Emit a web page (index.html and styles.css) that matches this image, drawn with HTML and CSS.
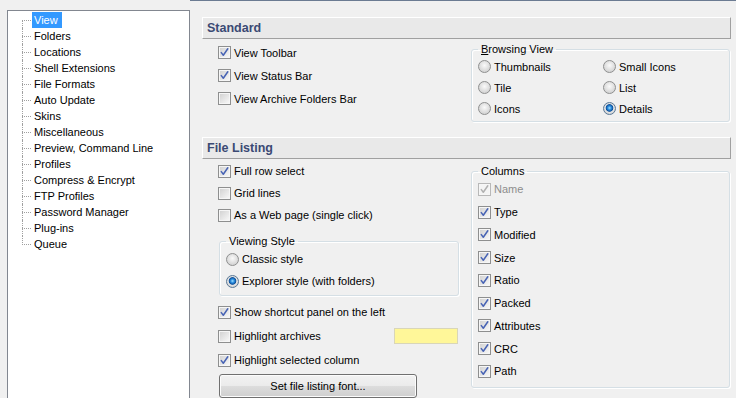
FILE: index.html
```html
<!DOCTYPE html>
<html lang="en">
<head>
    <meta charset="UTF-8">
    <title>Settings</title>
    <link rel="stylesheet" href="styles.css">
</head>
<body>
    <div class="window">
        <div class="tree">
            <ul class="tree-list">
                <li class="selected"><span>View</span></li>
                <li><span>Folders</span></li>
                <li><span>Locations</span></li>
                <li><span>Shell Extensions</span></li>
                <li><span>File Formats</span></li>
                <li><span>Auto Update</span></li>
                <li><span>Skins</span></li>
                <li><span>Miscellaneous</span></li>
                <li><span>Preview, Command Line</span></li>
                <li><span>Profiles</span></li>
                <li><span>Compress &amp; Encrypt</span></li>
                <li><span>FTP Profiles</span></li>
                <li><span>Password Manager</span></li>
                <li><span>Plug-ins</span></li>
                <li><span>Queue</span></li>
            </ul>
        </div>

        <div class="pane">
            <div class="section">
                <div class="section-head">Standard</div>
                <div class="section-body standard">
                    <div class="col-left">
                        <div class="row"><span class="cb checked"><svg viewBox="0 0 11 11"><path d="M2.3 5.6 L4.3 8.2 L8.8 1.8"/></svg></span>View Toolbar</div>
                        <div class="row"><span class="cb checked"><svg viewBox="0 0 11 11"><path d="M2.3 5.6 L4.3 8.2 L8.8 1.8"/></svg></span>View Status Bar</div>
                        <div class="row"><span class="cb"></span>View Archive Folders Bar</div>
                    </div>
                    <fieldset class="group browsing">
                        <legend><u>B</u>rowsing View</legend>
                        <div class="radio-grid">
                            <div class="opt"><span class="radio"></span>Thumbnails</div>
                            <div class="opt"><span class="radio"></span>Small Icons</div>
                            <div class="opt"><span class="radio"></span>Tile</div>
                            <div class="opt"><span class="radio"></span>List</div>
                            <div class="opt"><span class="radio"></span>Icons</div>
                            <div class="opt"><span class="radio on"></span>Details</div>
                        </div>
                    </fieldset>
                </div>
            </div>

            <div class="section listing">
                <div class="section-head">File Listing</div>
                <div class="section-body">
                    <div class="col-left">
                        <div class="row short"><span class="cb checked"><svg viewBox="0 0 11 11"><path d="M2.3 5.6 L4.3 8.2 L8.8 1.8"/></svg></span>Full row select</div>
                        <div class="row short"><span class="cb"></span>Grid lines</div>
                        <div class="row short"><span class="cb"></span>As a Web page (single click)</div>

                        <fieldset class="group viewing">
                            <legend>Viewing Style</legend>
                            <div class="opt tall"><span class="radio"></span>Classic style</div>
                            <div class="opt tall"><span class="radio on"></span>Explorer style (with folders)</div>
                        </fieldset>

                        <div class="row wide first"><span class="cb checked"><svg viewBox="0 0 11 11"><path d="M2.3 5.6 L4.3 8.2 L8.8 1.8"/></svg></span>Show shortcut panel on the left</div>
                        <div class="row wide"><span class="cb"></span>Highlight archives<span class="swatch"></span></div>
                        <div class="row wide"><span class="cb checked"><svg viewBox="0 0 11 11"><path d="M2.3 5.6 L4.3 8.2 L8.8 1.8"/></svg></span>Highlight selected column</div>
                        <button class="button">Set file listing font...</button>
                    </div>

                    <fieldset class="group columns">
                        <legend>Columns</legend>
                        <div class="opt col disabled"><span class="cb checked"><svg viewBox="0 0 11 11"><path d="M2.3 5.6 L4.3 8.2 L8.8 1.8"/></svg></span>Name</div>
                        <div class="opt col"><span class="cb checked"><svg viewBox="0 0 11 11"><path d="M2.3 5.6 L4.3 8.2 L8.8 1.8"/></svg></span>Type</div>
                        <div class="opt col"><span class="cb checked"><svg viewBox="0 0 11 11"><path d="M2.3 5.6 L4.3 8.2 L8.8 1.8"/></svg></span>Modified</div>
                        <div class="opt col"><span class="cb checked"><svg viewBox="0 0 11 11"><path d="M2.3 5.6 L4.3 8.2 L8.8 1.8"/></svg></span>Size</div>
                        <div class="opt col"><span class="cb checked"><svg viewBox="0 0 11 11"><path d="M2.3 5.6 L4.3 8.2 L8.8 1.8"/></svg></span>Ratio</div>
                        <div class="opt col"><span class="cb checked"><svg viewBox="0 0 11 11"><path d="M2.3 5.6 L4.3 8.2 L8.8 1.8"/></svg></span>Packed</div>
                        <div class="opt col"><span class="cb checked"><svg viewBox="0 0 11 11"><path d="M2.3 5.6 L4.3 8.2 L8.8 1.8"/></svg></span>Attributes</div>
                        <div class="opt col"><span class="cb checked"><svg viewBox="0 0 11 11"><path d="M2.3 5.6 L4.3 8.2 L8.8 1.8"/></svg></span>CRC</div>
                        <div class="opt col"><span class="cb checked"><svg viewBox="0 0 11 11"><path d="M2.3 5.6 L4.3 8.2 L8.8 1.8"/></svg></span>Path</div>
                    </fieldset>
                </div>
            </div>
        </div>
    </div>
</body>
</html>
```

FILE: styles.css
```css
* {
    box-sizing: border-box;
}

body {
    margin: 0;
    background: #f0f0f0;
    font-family: "Liberation Sans", Arial, sans-serif;
    font-size: 11px;
    color: #000;
    overflow: hidden;
}

.window {
    display: flex;
    height: 398px;
}

/* left tree */
.tree {
    width: 183px;
    margin: 10px 0 0 7px;
    padding-top: 1px;
    background: #fff;
    border: 1px solid #828790;
    border-bottom: none;
}

.tree-list {
    list-style: none;
    margin: 0 0 0 14px;
    padding: 0;
}

.tree-list li {
    position: relative;
    height: 16px;
    line-height: 16px;
    padding-left: 10px;
}

.tree-list li span {
    display: inline-block;
    height: 16px;
    padding: 0 4px 0 2px;
}

.tree-list li.selected span {
    background: #3399ff;
    color: #fff;
}

.tree-list li::before {
    content: '';
    position: absolute;
    left: 0;
    top: 8px;
    width: 9px;
    border-top: 1px dotted #a0a0a0;
}

.tree-list li::after {
    content: '';
    position: absolute;
    left: 0;
    top: 0;
    height: 16px;
    border-left: 1px dotted #a0a0a0;
}

.tree-list li:first-child::after {
    top: 8px;
    height: 8px;
}

.tree-list li:last-child::after {
    height: 9px;
}

/* right pane */
.pane {
    flex: 1;
    padding: 16px 5px 0 12px;
    border-top: 1px solid #6b7b92;
}

.section-head {
    height: 22px;
    line-height: 20px;
    padding-left: 4px;
    background: #e9e9e9;
    border-top: 1px solid #fff;
    border-left: 1px solid #fff;
    border-bottom: 1px solid #a0a0a0;
    border-right: 1px solid #a0a0a0;
    font-size: 12.5px;
    font-weight: bold;
    color: #3b4a74;
}

.section-body {
    display: flex;
    align-items: flex-start;
    padding: 1px 0 0 16px;
}

.section-body.standard {
    padding-top: 2px;
}

.listing {
    margin-top: 15px;
}

.col-left {
    width: 253px;
}

.row {
    display: flex;
    align-items: center;
    gap: 3px;
    height: 23px;
}

.row.short {
    height: 22px;
}

.row.wide {
    height: 24px;
    width: 240px;
}

.row.first {
    margin-top: 4px;
}

/* checkbox */
.cb {
    flex: none;
    width: 13px;
    height: 13px;
    border: 1px solid #8e8f8f;
    background: linear-gradient(135deg, #cfcfcf, #f4f4f4 85%);
    box-shadow: inset 0 0 0 1px #f6f6f6;
}

.cb svg {
    display: block;
    width: 11px;
    height: 11px;
}

.cb svg path {
    fill: none;
    stroke: #4763b4;
    stroke-width: 1.5;
    stroke-linecap: round;
    stroke-linejoin: round;
}

.disabled {
    color: #8d8d8d;
}

.disabled .cb {
    border-color: #b8b8b8;
    background: #f4f4f4;
}

.disabled .cb svg path {
    stroke: #b0b0b0;
}

/* radio */
.radio {
    flex: none;
    width: 13px;
    height: 13px;
    border-radius: 50%;
    border: 1px solid #8e8f8f;
    background: radial-gradient(circle at 50% 40%, #fafafa, #d6d6d6 70%);
}

.radio.on {
    border-color: #5a7896;
    background: radial-gradient(circle at 50% 45%, #9ee0ff 0, #2b8ee0 1.8px, #10519a 3.4px, #e6e6e6 4.2px, #d2d2d2 6px);
}

/* group boxes */
.group {
    margin: 0;
    padding: 0 0 2px 6px;
    border: 1px solid #d5dfe5;
    border-radius: 3px;
    box-shadow: inset 1px 1px 0 #fff, 1px 1px 0 #fff;
    min-width: 0;
}

.group legend {
    padding: 0 3px;
    line-height: 14px;
}

.browsing {
    width: 259px;
    margin-top: 1px;
}

.radio-grid {
    display: grid;
    grid-template-columns: 125px 1fr;
    grid-auto-rows: 21px;
}

.opt {
    display: flex;
    align-items: center;
    gap: 3px;
}

.opt.tall {
    height: 22px;
}

.viewing {
    width: 240px;
    margin: 8px 0 0 1px;
    padding-bottom: 3px;
}

.columns {
    width: 259px;
    margin-top: 4px;
    padding-bottom: 4px;
}

.opt.col {
    height: 22.75px;
}

.swatch {
    margin-left: auto;
    width: 64px;
    height: 16px;
    background: #fff799;
    border: 1px solid #d9d6b8;
}

.button {
    display: block;
    width: 198px;
    height: 24px;
    margin: 2px 0 0 1px;
    font-family: inherit;
    font-size: 11px;
    color: #000;
    border: 1px solid #707070;
    border-radius: 3px;
    background: linear-gradient(#f2f2f2, #ebebeb 50%, #dddddd 50%, #cfcfcf);
    box-shadow: inset 0 0 0 1px #fcfcfc;
}
```
